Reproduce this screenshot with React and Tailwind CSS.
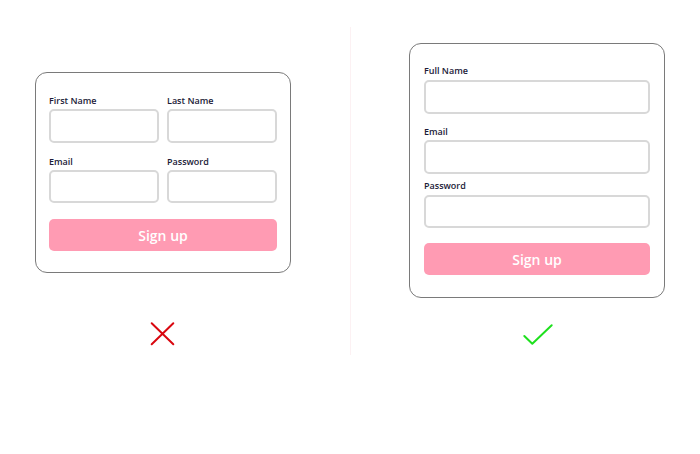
import React from "react";

const font = { fontFamily: '"Open Sans", "Noto Sans", sans-serif' };

function Label({ children, className = "" }) {
  return (
    <div className={`text-[9px] leading-[12px] font-semibold text-[#1b1b38] ${className}`}>
      {children}
    </div>
  );
}

function Field({ className = "" }) {
  return <div className={`rounded-[5px] border-2 border-[#d8d8d8] bg-white ${className}`} />;
}

function SignUp({ className = "" }) {
  return (
    <div
      className={`h-[32px] rounded-[5px] bg-[#ff9bb3] flex items-center justify-center text-white text-[14px] font-semibold ${className}`}
    >
      Sign up
    </div>
  );
}

function Cross() {
  return (
    <svg width="34" height="32" viewBox="0 0 34 32" fill="none">
      <path d="M6.7 5.3 L28.3 26.3 M28.3 5.3 L6.7 26.3" stroke="#d9070f" strokeWidth="2" strokeLinecap="round" />
    </svg>
  );
}

function Check() {
  return (
    <svg width="38" height="28" viewBox="0 0 38 28" fill="none">
      <path d="M6.3 16 L14.3 23.7 L33.7 5.3" stroke="#1ee01e" strokeWidth="2" strokeLinecap="round" strokeLinejoin="round" />
    </svg>
  );
}

export default function App() {
  return (
    <div className="w-[700px] h-[454px] bg-white flex" style={font}>
      {/* two-column variant */}
      <div className="w-[350px] flex flex-col pt-[72px] pl-[35px]">
        <div className="w-[256px] h-[201px] rounded-[12px] border border-[#7a7a7a] px-[13px] pt-[22px]">
          <div className="grid grid-cols-2 gap-x-[8px]">
            <div>
              <Label className="mb-[2px]">First Name</Label>
              <Field className="h-[34px]" />
            </div>
            <div>
              <Label className="mb-[2px]">Last Name</Label>
              <Field className="h-[34px]" />
            </div>
            <div className="mt-[13px]">
              <Label className="mb-[2px]">Email</Label>
              <Field className="h-[33px]" />
            </div>
            <div className="mt-[13px]">
              <Label className="mb-[2px]">Password</Label>
              <Field className="h-[33px]" />
            </div>
          </div>
          <SignUp className="mt-[16px]" />
        </div>
        <div className="mt-[45px] ml-[110px]">
          <Cross />
        </div>
      </div>

      <div className="w-px h-[328px] mt-[27px] bg-[#fcf1f3]" />

      {/* single-column variant */}
      <div className="flex-1 flex flex-col pt-[43px] pl-[58px]">
        <div className="w-[256px] h-[255px] rounded-[12px] border border-[#7a7a7a] px-[14px] pt-[21px]">
          <Label className="mb-[3px]">Full Name</Label>
          <Field className="h-[34px]" />
          <Label className="mt-[12px] mb-[2px]">Email</Label>
          <Field className="h-[34px]" />
          <Label className="mt-[6px] mb-[3px]">Password</Label>
          <Field className="h-[33px]" />
          <SignUp className="mt-[15px]" />
        </div>
        <div className="mt-[22px] ml-[109px]">
          <Check />
        </div>
      </div>
    </div>
  );
}
